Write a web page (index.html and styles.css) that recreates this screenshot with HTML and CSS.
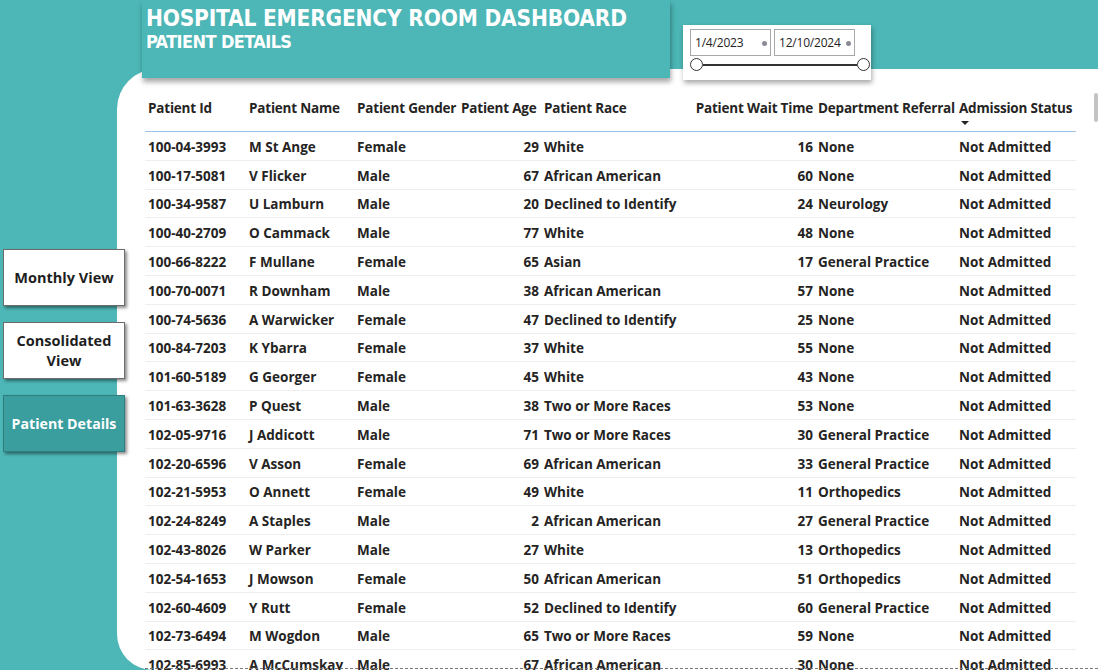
FILE: index.html
```html
<!DOCTYPE html>
<html>
<head>
<meta charset="utf-8">
<link rel="stylesheet" href="styles.css">
</head>
<body>
<div class="page">
  <aside class="sidebar">
    <div class="nav-btn">Monthly View</div>
    <div class="nav-btn">Consolidated View</div>
    <div class="nav-btn active">Patient Details</div>
  </aside>
  <main class="main">
    <header class="top">
      <div class="title-box">
        <div class="title">HOSPITAL EMERGENCY ROOM DASHBOARD</div>
        <div class="subtitle">PATIENT DETAILS</div>
      </div>
      <div class="slicer">
        <div class="dates">
          <div class="date-input"><span>1/4/2023</span><i class="dot"></i></div>
          <div class="date-input"><span>12/10/2024</span><i class="dot"></i></div>
        </div>
        <div class="slider">
          <span class="knob"></span>
          <span class="track"></span>
          <span class="knob"></span>
        </div>
      </div>
    </header>
    <section class="panel">
      <div class="scrollbar"></div>
      <div class="table">
        <div class="row head">
          <div class="c">Patient Id</div>
          <div class="c">Patient Name</div>
          <div class="c">Patient Gender</div>
          <div class="c">Patient Age</div>
          <div class="c">Patient Race</div>
          <div class="c num">Patient Wait Time</div>
          <div class="c">Department Referral</div>
          <div class="c sorted">Admission Status<span class="arrow"></span></div>
        </div>
        <div id="rows"></div>
      </div>
      <div class="page-edge"></div>
    </section>
  </main>
</div>
<script>
var data = [
["100-04-3993","M St Ange","Female","29","White","16","None"],
["100-17-5081","V Flicker","Male","67","African American","60","None"],
["100-34-9587","U Lamburn","Male","20","Declined to Identify","24","Neurology"],
["100-40-2709","O Cammack","Male","77","White","48","None"],
["100-66-8222","F Mullane","Female","65","Asian","17","General Practice"],
["100-70-0071","R Downham","Male","38","African American","57","None"],
["100-74-5636","A Warwicker","Female","47","Declined to Identify","25","None"],
["100-84-7203","K Ybarra","Female","37","White","55","None"],
["101-60-5189","G Georger","Female","45","White","43","None"],
["101-63-3628","P Quest","Male","38","Two or More Races","53","None"],
["102-05-9716","J Addicott","Male","71","Two or More Races","30","General Practice"],
["102-20-6596","V Asson","Female","69","African American","33","General Practice"],
["102-21-5953","O Annett","Female","49","White","11","Orthopedics"],
["102-24-8249","A Staples","Male","2","African American","27","General Practice"],
["102-43-8026","W Parker","Male","27","White","13","Orthopedics"],
["102-54-1653","J Mowson","Female","50","African American","51","Orthopedics"],
["102-60-4609","Y Rutt","Female","52","Declined to Identify","60","General Practice"],
["102-73-6494","M Wogdon","Male","65","Two or More Races","59","None"],
["102-85-6993","A McCumskay","Male","67","African American","30","None"]
];
var html = "";
data.forEach(function(r){
  html += '<div class="row">' +
    '<div class="c">'+r[0]+'</div>' +
    '<div class="c">'+r[1]+'</div>' +
    '<div class="c">'+r[2]+'</div>' +
    '<div class="c num">'+r[3]+'</div>' +
    '<div class="c">'+r[4]+'</div>' +
    '<div class="c num">'+r[5]+'</div>' +
    '<div class="c">'+r[6]+'</div>' +
    '<div class="c">Not Admitted</div>' +
  '</div>';
});
document.getElementById("rows").innerHTML = html;
</script>
</body>
</html>
```

FILE: styles.css
```css
* { box-sizing: border-box; }
html, body { margin: 0; padding: 0; }
body {
  width: 1098px;
  height: 670px;
  overflow: hidden;
  background: #4db6b6;
  font-family: "Open Sans", "Noto Sans", sans-serif;
  color: #252423;
}
.page {
  display: grid;
  grid-template-columns: 117px 1fr;
  height: 670px;
}
.sidebar {
  padding: 249px 0 0 3px;
  display: flex;
  flex-direction: column;
  gap: 16px;
}
.nav-btn {
  width: 122px;
  height: 57px;
  background: #fff;
  border: 1px solid #6d6d6d;
  box-shadow: 2px 2px 3px rgba(0,0,0,0.45);
  display: flex;
  align-items: center;
  justify-content: center;
  text-align: center;
  font-weight: 700;
  font-size: 14.5px;
  line-height: 20px;
  color: #1e1e1e;
  padding: 0 8px;
  position: relative;
  z-index: 2;
}
.nav-btn.active {
  background: #3a9d9e;
  border-color: #2f7f80;
  color: #fff;
  padding: 0;
  font-size: 14.2px;
}
.main {
  display: flex;
  flex-direction: column;
  min-width: 0;
  min-height: 0;
  height: 670px;
}
.top {
  height: 69px;
  flex: none;
  display: flex;
  align-items: flex-start;
  position: relative;
  z-index: 3;
}
.title-box {
  margin-left: 25px;
  width: 528px;
  height: 78px;
  flex: none;
  background: #4db6b6;
  box-shadow: 1px 4px 5px rgba(0,0,0,0.35);
  padding: 5px 0 0 4px;
  color: #fff;
}
.title {
  font-family: "DejaVu Sans Condensed", "DejaVu Sans", sans-serif;
  font-weight: 700;
  font-size: 22.5px;
  line-height: 26px;
  letter-spacing: -0.2px;
}
.subtitle {
  font-family: "DejaVu Sans Condensed", "DejaVu Sans", sans-serif;
  font-weight: 700;
  font-size: 18px;
  line-height: 21px;
  letter-spacing: -0.6px;
}
.slicer {
  margin: 25px 0 0 13px;
  width: 188px;
  height: 55px;
  flex: none;
  background: #fff;
  box-shadow: 1px 3px 5px rgba(0,0,0,0.35);
  padding: 4px 0 0 7px;
}
.dates {
  display: flex;
  gap: 3px;
}
.date-input {
  width: 81px;
  height: 27px;
  border: 1px solid #a8a8a8;
  display: flex;
  align-items: center;
  justify-content: space-between;
  padding: 0 3px 0 4px;
  font-size: 12px;
  letter-spacing: -0.2px;
  color: #252423;
}
.dot {
  width: 5px;
  height: 5px;
  border-radius: 50%;
  background: #8a8a94;
  margin-top: 2px;
  flex: none;
}
.slider {
  display: flex;
  align-items: center;
  margin-top: 2px;
  width: 180px;
}
.knob {
  width: 13px;
  height: 13px;
  border: 1px solid #333;
  border-radius: 50%;
  background: #fff;
  flex: none;
}
.track {
  flex: 1;
  height: 2px;
  background: #333;
}
.panel {
  flex: 1;
  min-height: 0;
  background: #fff;
  border-radius: 40px 0 0 36px;
  position: relative;
  overflow: hidden;
  padding: 26px 0 0 28px;
}
.scrollbar {
  position: absolute;
  right: 0;
  top: 24px;
  width: 4px;
  height: 29px;
  background: #c4c4c4;
  border-radius: 2px;
}
.table {
  width: 931px;
}
.row {
  display: grid;
  grid-template-columns: 101px 108px 104px 83px 151px 123px 141px 120px;
  height: 28.8px;
  align-items: center;
  border-bottom: 1px solid #eeeeee;
  font-size: 13.5px;
  font-weight: 700;
  white-space: nowrap;
  padding-top: 2px;
}
.row.head {
  height: 37px;
  align-items: start;
  padding-top: 4px;
  letter-spacing: -0.2px;
  border-bottom: 1px solid #9cc3e6;
}
.c {
  padding: 0 3px;
  overflow: hidden;
}
.num { text-align: right; padding-right: 2px; }
.head .c { overflow: visible; }
.sorted {
  position: relative;
}
.arrow {
  position: absolute;
  left: 5px;
  top: 22px;
  width: 0;
  height: 0;
  border-left: 4px solid transparent;
  border-right: 4px solid transparent;
  border-top: 4px solid #252423;
}
.page-edge {
  position: absolute;
  left: 23px;
  right: 0;
  bottom: 1px;
  border-bottom: 1px dashed #777;
}
```
